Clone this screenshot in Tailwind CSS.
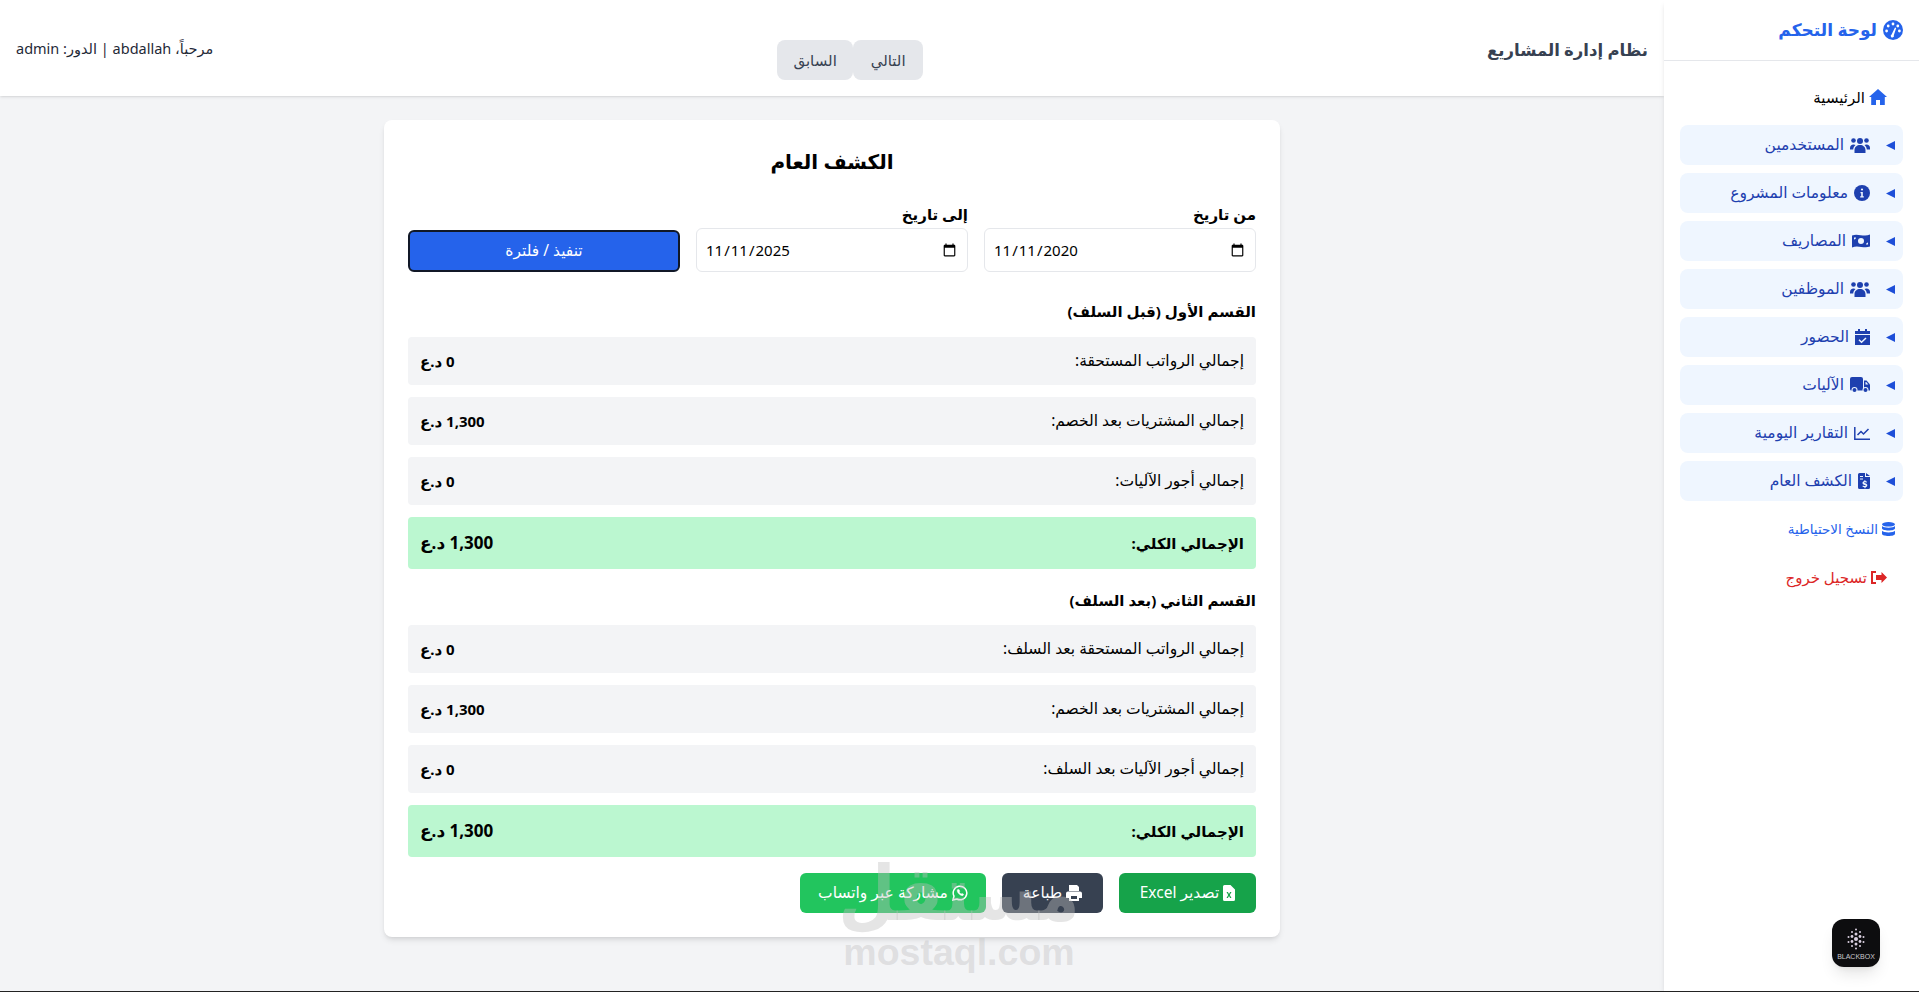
<!DOCTYPE html>
<html lang="ar" dir="rtl">
<head>
<meta charset="utf-8">
<title>الكشف العام</title>
<script src="https://cdn.jsdelivr.net/npm/@tailwindcss/browser@4"></script>
</head>
<body class="bg-[#f3f4f6] font-['Noto_Sans','DejaVu_Sans',sans-serif] text-black overflow-hidden">
<div class="h-[992px] flex flex-col">
<div class="flex flex-1 min-h-0">

<aside class="w-[255px] shrink-0 bg-white shadow-md relative z-10 flex flex-col">
  <div class="h-[61px] border-b border-[#e5e7eb] px-4 flex items-center gap-1.5 text-[17px] font-bold text-[#2563eb]">
    <svg class="w-5 h-5" viewBox="0 0 20 20"><circle cx="10" cy="10" r="10" fill="#2563eb"/><circle cx="10" cy="4" r="1.4" fill="#fff"/><circle cx="5.2" cy="6" r="1.4" fill="#fff"/><circle cx="14.8" cy="6" r="1.4" fill="#fff"/><circle cx="3.6" cy="11" r="1.4" fill="#fff"/><circle cx="16.4" cy="11" r="1.4" fill="#fff"/><path d="M8.6 14.5 12 7.5l1.2.5-2.4 7.2a1.6 1.6 0 1 1-2.2-.7z" fill="#fff"/></svg>
    <span>لوحة التحكم</span>
  </div>
  <nav class="flex flex-col px-4 pt-4 gap-2 text-[15.5px] font-medium">
    <a class="h-10 px-4 flex items-center gap-1 text-black font-normal text-[15px]">
      <svg class="w-[18px] h-4 text-[#2563eb]" viewBox="0 0 18 16" fill="currentColor"><path d="M9 0 0 8h2.2v8H7v-5h4v5h4.8V8H18z"/></svg>
      <span>الرئيسية</span>
    </a>

    <div class="h-10 bg-[#eff6ff] rounded-lg px-2 flex items-center text-[#1e40af]">
      <svg class="w-[9px] h-[9px] ml-4 shrink-0" viewBox="0 0 9 9" fill="#1d4ed8"><path d="M0 4.5 9 0v9z"/></svg>
      <span class="flex items-center gap-1.5"><svg class="w-5 h-4" viewBox="0 0 20 16" fill="currentColor"><circle cx="10" cy="4" r="3"/><circle cx="3.5" cy="3.5" r="2.3"/><circle cx="16.5" cy="3.5" r="2.3"/><path d="M4.5 16v-3c0-3 2.5-5 5.500-5s5.500 2 5.500 5v3zM0 11c0-2 1.500-3.500 3.500-3.500 1 0 1.600.3 2 .6C4.200 9.300 3.300 10.800 3.200 12.500H0zM20 11c0-2-1.500-3.500-3.500-3.500-1 0-1.600.3-2 .6 1.300 1.200 2.200 2.700 2.300 4.400H20z"/></svg><span>المستخدمين</span></span>
    </div>
    <div class="h-10 bg-[#eff6ff] rounded-lg px-2 flex items-center text-[#1e40af]">
      <svg class="w-[9px] h-[9px] ml-4 shrink-0" viewBox="0 0 9 9" fill="#1d4ed8"><path d="M0 4.5 9 0v9z"/></svg>
      <span class="flex items-center gap-1.5"><svg class="w-4 h-4" viewBox="0 0 16 16"><circle cx="8" cy="8" r="8" fill="currentColor"/><circle cx="8" cy="4.500" r="1.100" fill="#eff6ff"/><path d="M6.500 7h2.300v4.200h1V12.500h-3.600v-1.300h1V8.300h-.7z" fill="#eff6ff"/></svg><span>معلومات المشروع</span></span>
    </div>
    <div class="h-10 bg-[#eff6ff] rounded-lg px-2 flex items-center text-[#1e40af]">
      <svg class="w-[9px] h-[9px] ml-4 shrink-0" viewBox="0 0 9 9" fill="#1d4ed8"><path d="M0 4.5 9 0v9z"/></svg>
      <span class="flex items-center gap-1.5"><svg class="w-[18px] h-4" viewBox="0 0 18 14" fill="currentColor" fill-rule="evenodd"><path d="M0 1.500C6 -1 12 3.500 18 .5v12c-6 2.500-12-2-18 1zM9 4a3 3 0 1 0 0 6 3 3 0 0 0 0-6zM2 3.500v2c1 0 2-1 2-2zM16 10.500v-2c-1 0-2 1-2 2z"/></svg><span>المصاريف</span></span>
    </div>
    <div class="h-10 bg-[#eff6ff] rounded-lg px-2 flex items-center text-[#1e40af]">
      <svg class="w-[9px] h-[9px] ml-4 shrink-0" viewBox="0 0 9 9" fill="#1d4ed8"><path d="M0 4.5 9 0v9z"/></svg>
      <span class="flex items-center gap-1.5"><svg class="w-5 h-4" viewBox="0 0 20 16" fill="currentColor"><circle cx="10" cy="4" r="3"/><circle cx="3.5" cy="3.5" r="2.3"/><circle cx="16.5" cy="3.5" r="2.3"/><path d="M4.5 16v-3c0-3 2.5-5 5.500-5s5.500 2 5.500 5v3zM0 11c0-2 1.500-3.500 3.500-3.500 1 0 1.600.3 2 .6C4.200 9.300 3.300 10.800 3.200 12.500H0zM20 11c0-2-1.500-3.500-3.500-3.500-1 0-1.600.3-2 .6 1.300 1.200 2.200 2.700 2.300 4.400H20z"/></svg><span>الموظفين</span></span>
    </div>
    <div class="h-10 bg-[#eff6ff] rounded-lg px-2 flex items-center text-[#1e40af]">
      <svg class="w-[9px] h-[9px] ml-4 shrink-0" viewBox="0 0 9 9" fill="#1d4ed8"><path d="M0 4.5 9 0v9z"/></svg>
      <span class="flex items-center gap-1.5"><svg class="w-[15px] h-4" viewBox="0 0 15 16" fill="currentColor" fill-rule="evenodd"><path d="M3 0h2v2h5V0h2v2h3v3H0V2h3zM0 6h15v10H0zM10.500 8.500 6.500 12.300 4.500 10.300l-1 1 3 3 5-4.800z"/></svg><span>الحضور</span></span>
    </div>
    <div class="h-10 bg-[#eff6ff] rounded-lg px-2 flex items-center text-[#1e40af]">
      <svg class="w-[9px] h-[9px] ml-4 shrink-0" viewBox="0 0 9 9" fill="#1d4ed8"><path d="M0 4.5 9 0v9z"/></svg>
      <span class="flex items-center gap-1.5"><svg class="w-5 h-4" viewBox="0 0 20 16" fill="currentColor"><path d="M2 0h9a2 2 0 0 1 2 2v11.500H1.500A1.500 1.500 0 0 1 0 12V2a2 2 0 0 1 2-2z"/><path d="M14 3.500h2.500L20 7.500v6h-6z"/><path d="M15.500 5v2.500h2.800L16.200 5z" fill="#eff6ff"/><circle cx="4.500" cy="13" r="3" fill="#eff6ff"/><circle cx="4.500" cy="13" r="2"/><circle cx="15.500" cy="13" r="3" fill="#eff6ff"/><circle cx="15.500" cy="13" r="2"/></svg><span>الآليات</span></span>
    </div>
    <div class="h-10 bg-[#eff6ff] rounded-lg px-2 flex items-center text-[#1e40af]">
      <svg class="w-[9px] h-[9px] ml-4 shrink-0" viewBox="0 0 9 9" fill="#1d4ed8"><path d="M0 4.5 9 0v9z"/></svg>
      <span class="flex items-center gap-1.5"><svg class="w-4 h-[13px]" viewBox="0 0 16 13" fill="none" stroke="currentColor" stroke-width="1.500"><path d="M.8 0v12.200H16"/><path d="M3.500 8l3.500-3.500 2.500 2.500 5-5"/></svg><span>التقارير اليومية</span></span>
    </div>
    <div class="h-10 bg-[#eff6ff] rounded-lg px-2 flex items-center text-[#1e40af]">
      <svg class="w-[9px] h-[9px] ml-4 shrink-0" viewBox="0 0 9 9" fill="#1d4ed8"><path d="M0 4.5 9 0v9z"/></svg>
      <span class="flex items-center gap-1.5"><svg class="w-3 h-4" viewBox="0 0 12 16" fill="currentColor" fill-rule="evenodd"><path d="M1.500 0H7v4h5v10.500a1.500 1.500 0 0 1-1.500 1.500h-9A1.500 1.500 0 0 1 0 14.500v-13A1.500 1.500 0 0 1 1.500 0zM8 0l4 3H8zM2 3v1h3V3zM2 5.500v1h3v-1zM6.500 7v1c-1.200.2-2 1-2 2 0 1.200 1 1.600 2.200 2 .8.300 1 .4 1 .7 0 .6-1.600.4-2.800-.2l-.4 1.200c.6.300 1.300.4 2 .5v1h1v-1c1.200-.2 1.800-1 1.800-1.900 0-1.300-1-1.700-2.200-2.100-.8-.3-1-.4-1-.6 0-.5 1.200-.4 2.400.1l.4-1.200c-.6-.2-1.100-.4-1.600-.4V7z" /></svg><span>الكشف العام</span></span>
    </div>

    <a class="h-10 px-2 flex items-center gap-1 text-[13.5px] font-normal text-[#2563eb]">
      <svg class="w-[13px] h-[14px]" viewBox="0 0 13 14" fill="currentColor"><ellipse cx="6.500" cy="2.300" rx="6.500" ry="2.300"/><path d="M0 4v2.200c0 1.300 2.900 2.300 6.500 2.300S13 7.500 13 6.200V4c-1 1-3.600 1.700-6.500 1.700S1 5 0 4zM0 8.800v2.900C0 13 2.900 14 6.500 14S13 13 13 11.700V8.800c-1 1-3.600 1.700-6.500 1.700S1 9.800 0 8.800z"/></svg>
      <span>النسخ الاحتياطية</span>
    </a>
    <a class="h-10 px-4 flex items-center gap-1 text-[15px] font-medium text-[#dc2626]">
      <svg class="w-4 h-[13px]" viewBox="0 0 16 13" fill="currentColor"><path d="M16 6.500 10.500 1v3H5v5h5.500v3z"/><path d="M5 0H0v13h5v-2H2V2h3z"/></svg>
      <span>تسجيل خروج</span>
    </a>
  </nav>
  <div class="absolute left-[168px] top-[919px] w-12 h-12 rounded-xl bg-[#0d0d0f] shadow-lg flex flex-col items-center justify-center overflow-hidden" dir="ltr">
    <svg class="w-7 h-7" viewBox="0 0 28 28" fill="#d9cfe0"><circle cx="14" cy="14" r="2"/><circle cx="14" cy="9" r="1.500"/><circle cx="14" cy="19" r="1.500"/><circle cx="10" cy="11.500" r="1.400"/><circle cx="18" cy="11.500" r="1.400"/><circle cx="10" cy="16.500" r="1.400"/><circle cx="18" cy="16.500" r="1.400"/><circle cx="14" cy="4.500" r="1"/><circle cx="14" cy="23.500" r="1"/><circle cx="10" cy="7" r="1"/><circle cx="18" cy="7" r="1"/><circle cx="6.500" cy="12" r="1"/><circle cx="21.500" cy="12" r="1"/><circle cx="6.500" cy="17" r="1"/><circle cx="21.500" cy="17" r="1"/><circle cx="10" cy="21" r="1"/><circle cx="18" cy="21" r="1"/></svg>
    <span class="text-[7px] leading-[8px] text-[#c8c8cc] font-['Liberation_Sans',sans-serif]">BLACKBOX</span>
  </div>
</aside>

<div class="flex-1 min-w-0 flex flex-col relative">
  <header class="h-[96px] bg-white shadow-sm flex justify-between items-start px-4 pt-[36px]">
    <h1 class="text-[16.5px] font-bold text-[#374151] leading-7">نظام إدارة المشاريع</h1>
    <div class="flex mt-1 text-[15px] font-medium text-[#374151]">
      <button class="h-10 w-[70px] bg-[#e5e7eb] rounded-lg">التالي</button>
      <button class="h-10 w-[76px] bg-[#e5e7eb] rounded-lg">السابق</button>
    </div>
    <p class="text-[14.5px] text-[#1f2937] leading-[25px]">مرحباً، abdallah | الدور: admin</p>
  </header>

  <main class="flex-1 pt-6 flex justify-center">
    <section class="w-[896px] h-[817px] bg-white rounded-lg shadow-md p-6">
      <h2 class="text-[20px] font-bold text-center leading-9">الكشف العام</h2>
      <div class="grid grid-cols-3 gap-4 items-end mt-6 mb-7">
        <label class="block text-[15px] leading-5 font-semibold">من تاريخ
          <input type="date" value="2020-11-11" class="block w-full h-11 mt-1 px-2 bg-white border border-[#e5e7eb] rounded-md text-[15px] font-normal">
        </label>
        <label class="block text-[15px] leading-5 font-semibold">إلى تاريخ
          <input type="date" value="2025-11-11" class="block w-full h-11 mt-1 px-2 bg-white border border-[#e5e7eb] rounded-md text-[15px] font-normal">
        </label>
        <button class="h-[42px] bg-[#2563eb] text-white text-[15.5px] rounded-md border-2 border-[#111827]">تنفيذ / فلترة</button>
      </div>
      <h3 class="text-[15px] font-bold leading-[22px] mb-[15px]">القسم الأول (قبل السلف)</h3>
      <div class="flex flex-col gap-3">
        <div class="h-12 px-3 bg-[#f3f4f6] rounded flex justify-between items-center text-[15.5px]"><span>إجمالي الرواتب المستحقة:</span><b class="text-[15px]">0 د.ع</b></div>
        <div class="h-12 px-3 bg-[#f3f4f6] rounded flex justify-between items-center text-[15.5px]"><span>إجمالي المشتريات بعد الخصم:</span><b class="text-[15px]">1,300 د.ع</b></div>
        <div class="h-12 px-3 bg-[#f3f4f6] rounded flex justify-between items-center text-[15.5px]"><span>إجمالي أجور الآليات:</span><b class="text-[15px]">0 د.ع</b></div>
        <div class="h-[52px] px-3 bg-[#bbf7d0] rounded flex justify-between items-center font-bold"><span class="text-[15px]">الإجمالي الكلي:</span><span class="text-[17px]">1,300 د.ع</span></div>
      </div>
      <h3 class="text-[15px] font-bold leading-[22px] mt-5 mb-[14px]">القسم الثاني (بعد السلف)</h3>
      <div class="flex flex-col gap-3">
        <div class="h-12 px-3 bg-[#f3f4f6] rounded flex justify-between items-center text-[15.5px]"><span>إجمالي الرواتب المستحقة بعد السلف:</span><b class="text-[15px]">0 د.ع</b></div>
        <div class="h-12 px-3 bg-[#f3f4f6] rounded flex justify-between items-center text-[15.5px]"><span>إجمالي المشتريات بعد الخصم:</span><b class="text-[15px]">1,300 د.ع</b></div>
        <div class="h-12 px-3 bg-[#f3f4f6] rounded flex justify-between items-center text-[15.5px]"><span>إجمالي أجور الآليات بعد السلف:</span><b class="text-[15px]">0 د.ع</b></div>
        <div class="h-[52px] px-3 bg-[#bbf7d0] rounded flex justify-between items-center font-bold"><span class="text-[15px]">الإجمالي الكلي:</span><span class="text-[17px]">1,300 د.ع</span></div>
      </div>
      <div class="flex gap-4 mt-4 text-[15.5px] text-white">
        <button class="h-10 w-[137px] bg-[#16a34a] rounded-md flex items-center justify-center gap-1"><svg class="w-3 h-4" viewBox="0 0 12 16"><path d="M1.500 0H7.500L12 4.500v10a1.500 1.500 0 0 1-1.500 1.500h-9A1.500 1.500 0 0 1 0 14.500v-13A1.500 1.500 0 0 1 1.500 0z" fill="#fff"/><path d="M3.500 7h1.400L6 9l1.100-2h1.400L6.800 10l1.700 3H7.100L6 11 4.900 13H3.500l1.700-3z" fill="#16a34a"/></svg><span>تصدير Excel</span></button>
        <button class="h-10 w-[101px] bg-[#374151] rounded-md flex items-center justify-center gap-1"><svg class="w-4 h-4" viewBox="0 0 16 16" fill="#fff" fill-rule="evenodd"><path d="M3 0h8l2 2v4H3zM2 6.500h12a2 2 0 0 1 2 2V13h-3v3H3v-3H0V8.500a2 2 0 0 1 2-2zM5 11v3h6v-3z"/></svg><span>طباعة</span></button>
        <button class="h-10 w-[186px] bg-[#22c55e] rounded-md flex items-center justify-center gap-1"><svg class="w-4 h-4" viewBox="0 0 16 16" fill="none" stroke="#fff" stroke-width="1.500"><path d="M1 15l1-3.800A6.800 6.800 0 1 1 4.800 14z"/><path d="M5.300 4.800c-.6 2.500 2.800 6.200 5.700 5.800l.6-1.300-1.700-.9-.7.700c-.9-.4-1.700-1.200-2.100-2.100l.7-.7-.8-1.700z" fill="#fff" stroke-width=".5"/></svg><span>مشاركة عبر واتساب</span></button>
      </div>
    </section>
  </main>

  <div class="absolute left-[843px] top-[852px] w-[232px] flex flex-col items-center text-[#bebebe]/40 pointer-events-none" dir="ltr">
    <span class="text-[66px] leading-[76px] font-bold scale-y-[1.15]" dir="rtl">مستقل</span>
    <span class="text-[37.5px] leading-[40px] font-bold font-['Liberation_Sans',sans-serif] mt-1">mostaql.com</span>
  </div>
</div>
</div>
<div class="h-px bg-[#222] relative z-20"></div>
</div>
</body>
</html>
